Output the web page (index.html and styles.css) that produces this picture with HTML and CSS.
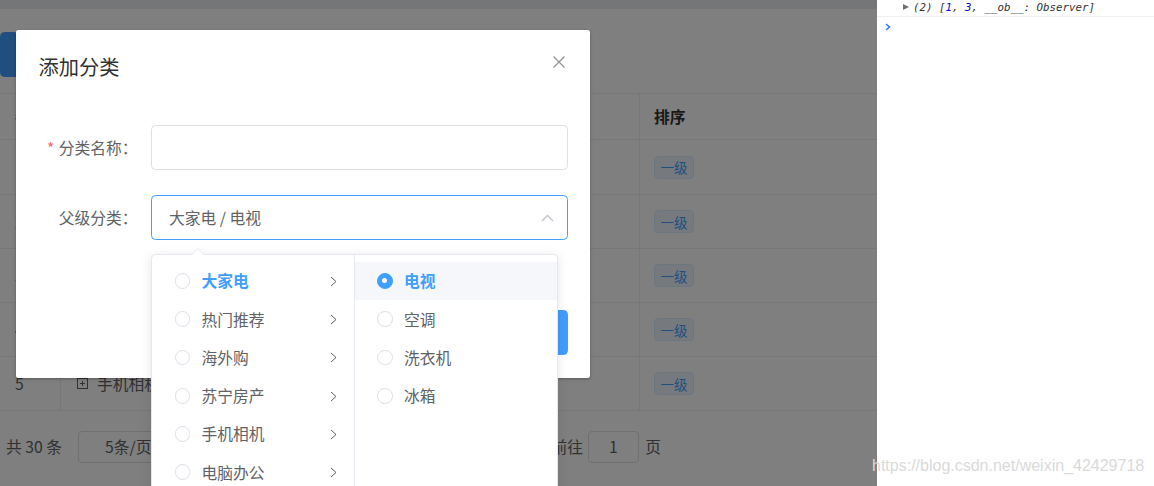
FILE: index.html
```html
<!DOCTYPE html>
<html lang="zh-CN">
<head>
<meta charset="utf-8">
<title>添加分类</title>
<link rel="stylesheet" href="styles.css">
</head>
<body>
<div class="screen">
  <div class="app">
    <div class="card">
      <div class="toolbar"><button class="btn btn-primary">添加分类</button></div>
      <div class="table">
        <div class="tr th">
          <div class="td c-idx">#</div>
          <div class="td c-name">分类名称</div>
          <div class="td c-sort">排序</div>
        </div>
        <div class="tr r1">
          <div class="td c-idx">1</div>
          <div class="td c-name">大家电</div>
          <div class="td c-sort"><span class="tag">一级</span></div>
        </div>
        <div class="tr">
          <div class="td c-idx">2</div>
          <div class="td c-name">热门推荐</div>
          <div class="td c-sort"><span class="tag">一级</span></div>
        </div>
        <div class="tr">
          <div class="td c-idx">3</div>
          <div class="td c-name">海外购</div>
          <div class="td c-sort"><span class="tag">一级</span></div>
        </div>
        <div class="tr">
          <div class="td c-idx">4</div>
          <div class="td c-name">苏宁房产</div>
          <div class="td c-sort"><span class="tag">一级</span></div>
        </div>
        <div class="tr">
          <div class="td c-idx">5</div>
          <div class="td c-name">
            <svg class="tree-icon" width="11" height="11" viewBox="0 0 11 11"><rect x="0.5" y="0.5" width="10" height="10" fill="none" stroke="#606266"/><path d="M3 5.5h5M5.5 3v5" stroke="#606266" fill="none"/></svg>
            <span>手机相机</span>
          </div>
          <div class="td c-sort"><span class="tag">一级</span></div>
        </div>
      </div>
      <div class="pagination">
        <span class="total">共 30 条</span>
        <span class="sizes">5条/页</span>
        <span class="jumper">前往<span class="jump-input">1</span>页</span>
      </div>
    </div>

    <div class="mask"></div>

    <div class="dialog">
      <div class="dialog-header">
        <span class="dialog-title">添加分类</span>
        <svg class="dialog-close" width="18" height="18" viewBox="0 0 18 18"><path d="M3.5 3.5L14.5 14.5M14.5 3.5L3.5 14.5" stroke="#909399" stroke-width="1.2" fill="none"/></svg>
      </div>
      <div class="dialog-body">
        <div class="form-item">
          <label class="form-label"><span class="req">*</span>分类名称：</label>
          <div class="form-content"><div class="input"></div></div>
        </div>
        <div class="form-item">
          <label class="form-label">父级分类：</label>
          <div class="form-content">
            <div class="input is-focus">
              <span class="input-text">大家电 / 电视</span>
              <svg class="arrow-up" width="13" height="8" viewBox="0 0 13 8"><path d="M1 7L6.5 1.5L12 7" stroke="#c0c4cc" stroke-width="1.3" fill="none"/></svg>
            </div>
          </div>
        </div>
      </div>
      <div class="dialog-footer">
        <button class="btn btn-default">取 消</button>
        <button class="btn btn-primary">确 定</button>
      </div>
    </div>

    <div class="cascader-popper">
      <span class="popper-arrow"></span>
      <ul class="menu menu-first">
        <li class="node in-path"><span class="radio"></span><span class="node-label">大家电</span><svg class="node-arrow" width="7" height="11" viewBox="0 0 7 11"><path d="M1 1L6 5.5L1 10" stroke="#606266" fill="none"/></svg></li>
        <li class="node"><span class="radio"></span><span class="node-label">热门推荐</span><svg class="node-arrow" width="7" height="11" viewBox="0 0 7 11"><path d="M1 1L6 5.5L1 10" stroke="#606266" fill="none"/></svg></li>
        <li class="node"><span class="radio"></span><span class="node-label">海外购</span><svg class="node-arrow" width="7" height="11" viewBox="0 0 7 11"><path d="M1 1L6 5.5L1 10" stroke="#606266" fill="none"/></svg></li>
        <li class="node"><span class="radio"></span><span class="node-label">苏宁房产</span><svg class="node-arrow" width="7" height="11" viewBox="0 0 7 11"><path d="M1 1L6 5.5L1 10" stroke="#606266" fill="none"/></svg></li>
        <li class="node"><span class="radio"></span><span class="node-label">手机相机</span><svg class="node-arrow" width="7" height="11" viewBox="0 0 7 11"><path d="M1 1L6 5.5L1 10" stroke="#606266" fill="none"/></svg></li>
        <li class="node"><span class="radio"></span><span class="node-label">电脑办公</span><svg class="node-arrow" width="7" height="11" viewBox="0 0 7 11"><path d="M1 1L6 5.5L1 10" stroke="#606266" fill="none"/></svg></li>
      </ul>
      <ul class="menu">
        <li class="node in-path is-hover"><span class="radio is-checked"></span><span class="node-label">电视</span></li>
        <li class="node"><span class="radio"></span><span class="node-label">空调</span></li>
        <li class="node"><span class="radio"></span><span class="node-label">洗衣机</span></li>
        <li class="node"><span class="radio"></span><span class="node-label">冰箱</span></li>
      </ul>
    </div>
  </div>

  <div class="devtools">
    <div class="console-line">
      <span class="expand-tri"></span>
      <span class="console-text">(2) [<span class="num">1</span>, <span class="num">3</span>, __ob__: Observer]</span>
    </div>
    <div class="console-prompt">
      <svg width="6" height="8" viewBox="0 0 6 8"><path d="M1 1L4.5 4L1 7" stroke="#367cf1" stroke-width="1.6" fill="none"/></svg>
    </div>
  </div>

  <div class="watermark">https://blog.csdn.net/weixin_42429718</div>
</div>
</body>
</html>
```

FILE: styles.css
```css
* {
  box-sizing: border-box;
  margin: 0;
  padding: 0;
}

html,
body {
  width: 1154px;
  height: 486px;
  overflow: hidden;
  background: #fff;
}

body {
  font-family: "Noto Sans CJK SC", "Microsoft YaHei", sans-serif;
  font-size: 15.75px;
  color: #606266;
}

ul {
  list-style: none;
}

.screen {
  position: relative;
  display: flex;
  width: 1154px;
  height: 486px;
}

/* ---------- background app ---------- */
.app {
  position: relative;
  flex: none;
  width: 877px;
  height: 100%;
  padding-top: 9px;
  background: #eaedf1;
  overflow: hidden;
}

.card {
  height: 100%;
  padding-top: 22.5px;
  background: #fff;
}

.toolbar {
  height: 45px;
}

.btn {
  height: 45px;
  padding: 0 22.5px;
  border-radius: 4.5px;
  font-family: inherit;
  font-size: 15.75px;
  border: 1px solid #dcdfe6;
  background: #fff;
  color: #606266;
}

.btn-primary {
  border-color: #409eff;
  background: #409eff;
  color: #fff;
}

.toolbar .btn-primary {
  width: 112px;
}

.table {
  margin-top: 16.5px;
  border-top: 1px solid #ebeef5;
}

.tr {
  display: grid;
  grid-template-columns: 61px 579px 1fr;
  height: 54px;
}

.tr.th {
  height: 46px;
}

.tr.r1 {
  height: 55px;
}

.td {
  display: flex;
  align-items: center;
  height: 100%;
  border-right: 1px solid #ebeef5;
  border-bottom: 1px solid #ebeef5;
  color: #606266;
  white-space: nowrap;
}

.th .td {
  font-weight: 700;
  color: #333;
}

.c-idx {
  padding-left: 15px;
}

.c-name {
  padding-left: 16px;
  gap: 9px;
}

.c-sort {
  padding-left: 14px;
  border-right: 0;
}

.tree-icon {
  flex: none;
}

.tag {
  display: inline-flex;
  align-items: center;
  justify-content: center;
  width: 40px;
  height: 23px;
  border: 1px solid #d9ecff;
  border-radius: 4px;
  background: #ecf5ff;
  color: #409eff;
  font-size: 13.5px;
}

.pagination {
  display: flex;
  align-items: center;
  height: 31.5px;
  margin-top: 20px;
  padding-left: 6px;
  white-space: nowrap;
}

.total {
  width: 72px;
}

.sizes {
  width: 112.5px;
  height: 31.5px;
  line-height: 29.5px;
  padding-left: 26px;
  border: 1px solid #dcdfe6;
  border-radius: 4px;
}

.jumper {
  display: flex;
  align-items: center;
  margin-left: 361px;
}

.jump-input {
  width: 51.75px;
  height: 31.5px;
  margin: 0 6px 0 4.5px;
  line-height: 29.5px;
  text-align: center;
  border: 1px solid #dcdfe6;
  border-radius: 4px;
}

.mask {
  position: absolute;
  inset: 0;
  background: rgba(0, 0, 0, 0.5);
}

/* ---------- dialog ---------- */
.dialog {
  position: absolute;
  left: 16px;
  top: 30px;
  width: 574px;
  background: #fff;
  border-radius: 2.25px;
  box-shadow: 0 1px 3px rgba(0, 0, 0, 0.3);
}

.dialog-header {
  position: relative;
  padding: 22.5px 22.5px 11.25px;
  height: 61px;
}

.dialog-title {
  display: block;
  font-size: 20.25px;
  line-height: 27px;
  color: #303133;
}

.dialog-close {
  position: absolute;
  top: 22.5px;
  right: 22.5px;
}

.dialog-body {
  padding: 33.75px 22.5px;
}

.form-item {
  display: flex;
  margin-bottom: 24.75px;
}

.form-item + .form-item {
  margin-top: 1.25px;
}

.form-label {
  flex: none;
  width: 112.5px;
  padding-right: 13.5px;
  line-height: 45px;
  text-align: right;
  color: #606266;
}

.req {
  margin-right: 4.5px;
  color: #f56c6c;
}

.form-content {
  flex: 1;
}

.input {
  position: relative;
  display: flex;
  align-items: center;
  height: 45px;
  padding-left: 17px;
  border: 1px solid #dcdfe6;
  border-radius: 4.5px;
  background: #fff;
}

.input.is-focus {
  border-color: #409eff;
}

.input-text {
  color: #606266;
}

.arrow-up {
  position: absolute;
  right: 13px;
  top: 18px;
}

.dialog-footer {
  display: flex;
  justify-content: flex-end;
  gap: 11.25px;
  padding: 12px 22.5px 22.5px;
}

/* ---------- cascader dropdown ---------- */
.cascader-popper {
  position: absolute;
  left: 151px;
  top: 254px;
  display: flex;
  border: 1px solid #e4e7ed;
  border-radius: 4.5px;
  background: #fff;
  box-shadow: 0 2px 12px 0 rgba(0, 0, 0, 0.1);
}

.popper-arrow {
  position: absolute;
  top: -7px;
  left: 39px;
  width: 0;
  height: 0;
  border: 7px solid transparent;
  border-top-width: 0;
  border-bottom-color: #e4e7ed;
}

.popper-arrow::after {
  content: "";
  position: absolute;
  top: 1px;
  left: -7px;
  border: 7px solid transparent;
  border-top-width: 0;
  border-bottom-color: #fff;
}

.menu {
  width: 202.5px;
  height: 245px;
  padding: 6.75px 0;
}

.menu-first {
  border-right: 1px solid #e4e7ed;
}

.node {
  position: relative;
  display: flex;
  align-items: center;
  height: 38.25px;
  padding: 0 33.75px 0 22.5px;
  color: #606266;
}

.node.is-hover {
  background: #f5f7fa;
}

.node.in-path {
  color: #409eff;
  font-weight: 600;
}

.radio {
  flex: none;
  position: relative;
  width: 15.75px;
  height: 15.75px;
  border: 1px solid #dcdfe6;
  border-radius: 50%;
  background: #fff;
}

.radio.is-checked {
  border-color: #409eff;
  background: #409eff;
}

.radio.is-checked::after {
  content: "";
  position: absolute;
  left: 50%;
  top: 50%;
  width: 5px;
  height: 5px;
  margin: -2.5px 0 0 -2.5px;
  border-radius: 50%;
  background: #fff;
}

.node-label {
  padding: 0 11.25px;
}

.node-arrow {
  position: absolute;
  right: 17px;
  top: 14px;
}

/* ---------- devtools ---------- */
.devtools {
  flex: 1;
  background: #fff;
  font-family: "DejaVu Sans Mono", "Liberation Mono", monospace;
  font-size: 10.8px;
  font-style: italic;
  color: #333;
}

.console-line {
  display: flex;
  align-items: center;
  height: 17px;
  padding: 0 0 2px 26px;
  border-bottom: 1px solid #f0f0f0;
  white-space: nowrap;
}

.expand-tri {
  width: 0;
  height: 0;
  margin-right: 4px;
  border-left: 6px solid #727272;
  border-top: 3.5px solid transparent;
  border-bottom: 3.5px solid transparent;
}

.num {
  color: #1c00cf;
}

.console-prompt {
  display: flex;
  align-items: center;
  height: 20px;
  padding-left: 8px;
}

.watermark {
  position: absolute;
  left: 872px;
  top: 457px;
  font-family: "Liberation Sans", Arial, sans-serif;
  font-size: 16px;
  line-height: 18px;
  color: #dadada;
  white-space: nowrap;
}
```
